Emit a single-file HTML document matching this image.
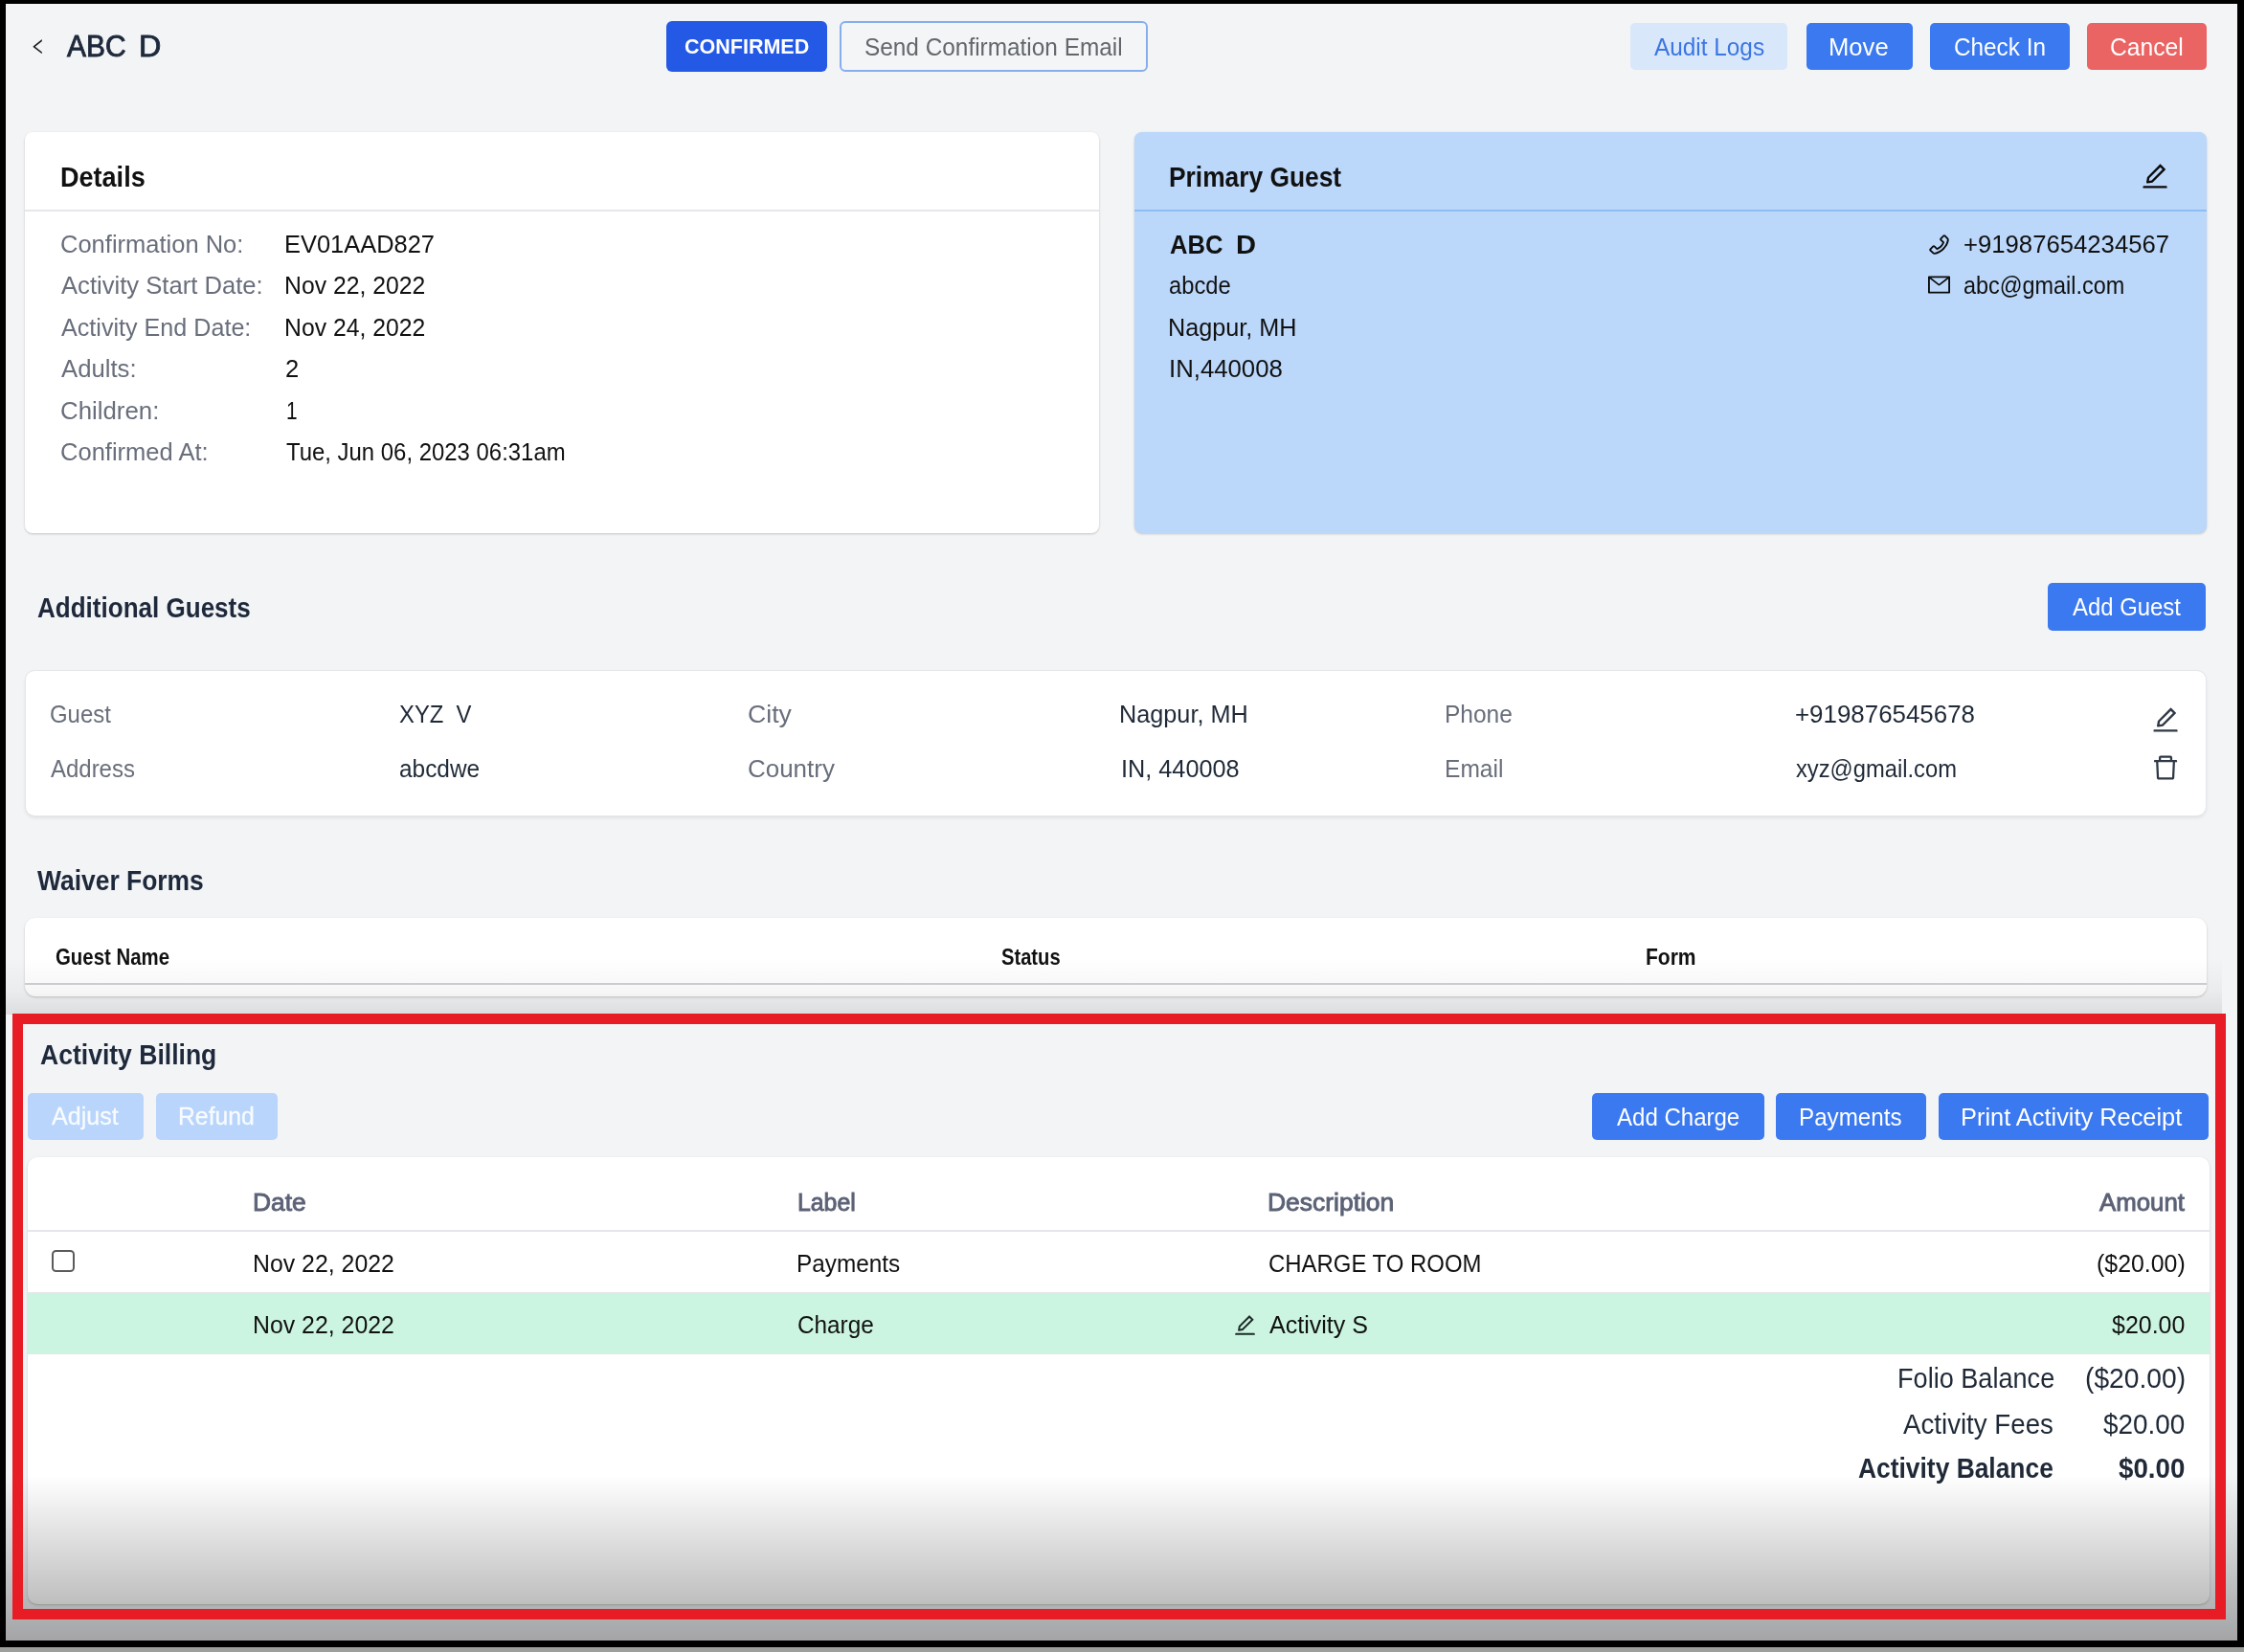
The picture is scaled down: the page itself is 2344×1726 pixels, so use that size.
<!DOCTYPE html>
<html lang="en"><head><meta charset="utf-8"><title>ABC D - Activity Reservation</title>
<style>
html,body{margin:0;padding:0;}
body{width:2344px;height:1726px;background:#000;overflow:hidden;position:relative;font-family:"Liberation Sans", sans-serif;}
#page{position:absolute;left:6px;top:4px;width:2331px;height:1710px;background:#f3f4f6;}
#strip{position:absolute;left:0;top:1721px;width:2344px;height:5px;background:#9d9f9d;}
.b{position:absolute;}
#txt{position:absolute;left:0;top:0;width:2344px;height:1726px;will-change:transform;}
.t{position:absolute;white-space:pre;transform-origin:0 50%;}
#shade{position:absolute;left:6px;top:1541px;width:2331px;height:173px;background:linear-gradient(to bottom,rgba(0,0,0,0),rgba(0,0,0,.325));}
#red{position:absolute;left:13px;top:1059px;width:2312px;height:633px;box-sizing:border-box;border:11px solid #e81c24;}
</style></head>
<body>
<div id="page"></div>
<div id="strip"></div>
<div class="b" style="left:695.5px;top:22px;width:168.7px;height:53.0px;background:#2459e5;border-radius:6px;"></div>
<div class="b" style="left:877.3px;top:22px;width:321.7px;height:53.0px;border:2px solid #86aeee;border-radius:6px;box-sizing:border-box;background:#f4f5f7;"></div>
<div class="b" style="left:1703.3px;top:23.8px;width:163.4px;height:49.4px;background:#d9e7fb;border-radius:5px;"></div>
<div class="b" style="left:1886.5px;top:23.8px;width:111.8px;height:49.4px;background:#3b79f0;border-radius:5px;"></div>
<div class="b" style="left:2016.3px;top:23.8px;width:146.0px;height:49.4px;background:#3b79f0;border-radius:5px;"></div>
<div class="b" style="left:2180px;top:23.8px;width:124.7px;height:49.4px;background:#ea6463;border-radius:5px;"></div>
<div class="b" style="left:25.8px;top:137.5px;width:1121.8px;height:419.9px;background:#fff;border-radius:8px;box-shadow:0 1px 3px rgba(0,0,0,.12),0 1px 2px rgba(0,0,0,.08);"></div>
<div class="b" style="left:25.8px;top:219.3px;width:1121.8px;height:2.0px;background:#e5e7eb;"></div>
<div class="b" style="left:1185px;top:137.8px;width:1119.5px;height:419.6px;background:#bbd7fa;border-radius:8px;box-shadow:0 1px 3px rgba(0,0,0,.12),0 1px 2px rgba(0,0,0,.08);"></div>
<div class="b" style="left:1185px;top:219.0px;width:1119.5px;height:2.0px;background:#8fbdf3;"></div>
<div class="b" style="left:2139.3px;top:609.4px;width:165.2px;height:49.2px;background:#3b79f0;border-radius:5px;"></div>
<div class="b" style="left:27.2px;top:701.3px;width:2276.5px;height:151.1px;background:#fff;border-radius:9px;box-shadow:0 0 0 1px #e4e6ea,0 2px 4px rgba(0,0,0,.10);"></div>
<div class="b" style="left:25.8px;top:959.4px;width:2279.2px;height:81.8px;background:#fff;border-radius:11px;box-shadow:0 1px 3px rgba(0,0,0,.12),0 1px 2px rgba(0,0,0,.08);"></div>
<div class="b" style="left:25.8px;top:1027.2px;width:2279.2px;height:1.6px;background:#cfd2d8;"></div>
<div class="b" style="left:6px;top:1000px;width:2315.0px;height:59.5px;background:linear-gradient(to bottom,rgba(0,0,0,0) 0%,rgba(0,0,0,.035) 60%,rgba(0,0,0,.095) 100%);"></div>
<div class="b" style="left:29.4px;top:1141.9px;width:120.3px;height:49.6px;background:#b9d5fb;border-radius:5px;"></div>
<div class="b" style="left:162.6px;top:1141.9px;width:127.7px;height:49.6px;background:#b9d5fb;border-radius:5px;"></div>
<div class="b" style="left:1663.1px;top:1141.9px;width:180.0px;height:49.6px;background:#3b79f0;border-radius:5px;"></div>
<div class="b" style="left:1855.4px;top:1141.9px;width:156.7px;height:49.6px;background:#3b79f0;border-radius:5px;"></div>
<div class="b" style="left:2024.7px;top:1141.9px;width:282.7px;height:49.6px;background:#3b79f0;border-radius:5px;"></div>
<div class="b" style="left:28.5px;top:1208.6px;width:2279.4px;height:467.9px;background:#fff;border-radius:10px;box-shadow:0 1px 3px rgba(0,0,0,.12),0 1px 2px rgba(0,0,0,.08);"></div>
<div class="b" style="left:28.5px;top:1285.3px;width:2279.4px;height:2.0px;background:#e5e7eb;"></div>
<div class="b" style="left:28.5px;top:1349.6px;width:2279.4px;height:1.4px;background:#e5e7eb;"></div>
<div class="b" style="left:28.5px;top:1350.8px;width:2279.4px;height:64.0px;background:#cbf5e1;"></div>
<div class="b" style="left:28.5px;top:1414.0px;width:2279.4px;height:1.2px;background:#dcebe4;"></div>
<div class="b" style="left:53.6px;top:1305.5px;width:24.0px;height:23.4px;border:2px solid #5b5b5b;border-radius:4.5px;box-sizing:border-box;background:#fff;"></div>
<svg class="b" style="left:30.8px;top:40.0px" width="17.4" height="17.4" viewBox="64 64 896 896"><path fill="#1a1a1a" d="M724 218.300V141c0-6.700-7.700-10.400-12.900-6.300L260.300 486.800a31.860 31.860 0 000 50.300l450.800 352.100c5.300 4.100 12.900.4 12.900-6.300v-77.300c0-4.900-2.300-9.600-6.100-12.600l-360-281 360-281.100c3.800-3 6.100-7.700 6.100-12.600z"/></svg>
<svg class="b" style="left:2237.4px;top:169.8px" width="28.1" height="28.1" viewBox="64 64 896 896"><path fill="#0a0a0a" d="M257.7 752c2 0 4-.2 6-.5L431.9 722c2-.4 3.9-1.3 5.3-2.8l423.9-423.9a9.96 9.96 0 000-14.1L694.9 114.9c-1.9-1.9-4.4-2.9-7.1-2.9s-5.2 1-7.1 2.9L256.8 538.8c-1.5 1.5-2.4 3.3-2.8 5.3l-29.500 168.200a33.500 33.500 0 009.400 29.800c6.600 6.400 14.900 9.900 23.800 9.900zm67.400-174.400L687.800 215l73.300 73.300-362.700 362.600-88.900 15.700 15.600-89zM880 836H144c-17.700 0-32 14.300-32 32v36c0 4.400 3.600 8 8 8h784c4.400 0 8-3.600 8-8v-36c0-17.700-14.300-32-32-32z"/></svg>
<svg class="b" style="left:2013.6px;top:243.9px" width="23" height="23" viewBox="64 64 896 896"><path fill="#0a0a0a" d="M877.1 238.7L770.6 132.300c-13-13-30.400-20.300-48.800-20.300s-35.800 7.200-48.800 20.300L558.300 246.800c-13 13-20.300 30.500-20.300 48.900 0 18.500 7.200 35.800 20.300 48.900l89.600 89.700a405.460 405.460 0 01-86.400 127.300c-36.700 36.900-79.600 66-127.200 86.600l-89.600-89.700c-13-13-30.400-20.300-48.800-20.300a68.200 68.200 0 00-48.800 20.300L132.300 673c-13 13-20.300 30.500-20.300 48.900 0 18.500 7.200 35.800 20.300 48.900l106.400 106.400c22.200 22.200 52.800 34.900 84.200 34.900 6.500 0 12.800-.5 19.200-1.600 132.400-21.800 263.800-92.300 369.900-198.300C818 606 888.400 474.600 910.400 342.100c6.300-37.600-6.300-76.300-33.300-103.400zm-37.600 91.500c-19.500 117.900-82.900 235.500-178.400 331s-213 158.900-330.900 178.400c-14.800 2.500-30-2.500-40.800-13.200L184.900 721.900 295.700 611l119.800 120 .9.900 21.600-8a481.290 481.290 0 00285.700-285.800l8-21.600-120.800-120.700 110.800-110.900 104.500 104.500c10.800 10.800 15.800 26 13.300 40.800z"/></svg>
<svg class="b" style="left:2013.6px;top:286.1px" width="23" height="23" viewBox="64 64 896 896"><path fill="#0a0a0a" d="M928 160H96c-17.700 0-32 14.300-32 32v640c0 17.700 14.300 32 32 32h832c17.700 0 32-14.300 32-32V192c0-17.700-14.300-32-32-32zm-40 110.800V792H136V270.800l-27.600-21.500 39.300-50.500 42.800 33.300h643.100l42.800-33.300 39.300 50.500-27.700 21.500zM833.600 232L512 482 190.400 232l-42.800-33.300-39.300 50.500 27.600 21.500 341.600 265.600a55.990 55.990 0 0068.700 0L888 270.800l27.600-21.500-39.300-50.500-42.700 33.200z"/></svg>
<svg class="b" style="left:2247.9px;top:737.9px" width="28.1" height="28.1" viewBox="64 64 896 896"><path fill="#2f3844" d="M257.7 752c2 0 4-.2 6-.5L431.9 722c2-.4 3.9-1.3 5.3-2.8l423.9-423.9a9.96 9.96 0 000-14.1L694.9 114.9c-1.9-1.9-4.4-2.9-7.1-2.9s-5.2 1-7.1 2.9L256.8 538.8c-1.5 1.5-2.4 3.3-2.8 5.3l-29.500 168.200a33.500 33.500 0 009.400 29.800c6.600 6.400 14.900 9.900 23.800 9.900zm67.400-174.400L687.800 215l73.300 73.300-362.700 362.600-88.900 15.700 15.600-89zM880 836H144c-17.700 0-32 14.300-32 32v36c0 4.400 3.600 8 8 8h784c4.400 0 8-3.600 8-8v-36c0-17.700-14.300-32-32-32z"/></svg>
<svg class="b" style="left:2247.6px;top:787.8px" width="28.1" height="28.1" viewBox="64 64 896 896"><path fill="#2f3844" d="M360 184h-8c4.400 0 8-3.600 8-8v8h304v-8c0 4.400 3.600 8 8 8h-8v72h72v-80c0-35.300-28.700-64-64-64H352c-35.300 0-64 28.700-64 64v80h72v-72zm504 72H160c-17.700 0-32 14.300-32 32v32c0 4.400 3.600 8 8 8h60.400l24.700 523c1.600 34.100 29.800 61 63.900 61h454c34.200 0 62.300-26.800 63.900-61l24.700-523H888c4.400 0 8-3.600 8-8v-32c0-17.700-14.300-32-32-32zM731.300 840H292.700l-24.200-512h487l-24.200 512z"/></svg>
<svg class="b" style="left:1288.8px;top:1372.8px" width="23" height="23" viewBox="64 64 896 896"><path fill="#1c2a26" d="M257.7 752c2 0 4-.2 6-.5L431.9 722c2-.4 3.9-1.3 5.3-2.8l423.9-423.9a9.96 9.96 0 000-14.1L694.9 114.9c-1.9-1.9-4.4-2.9-7.1-2.9s-5.2 1-7.1 2.9L256.8 538.8c-1.5 1.5-2.4 3.3-2.8 5.3l-29.500 168.200a33.500 33.500 0 009.400 29.800c6.600 6.400 14.900 9.900 23.800 9.900zm67.400-174.400L687.800 215l73.300 73.300-362.700 362.600-88.900 15.700 15.600-89zM880 836H144c-17.700 0-32 14.300-32 32v36c0 4.400 3.600 8 8 8h784c4.400 0 8-3.600 8-8v-36c0-17.700-14.300-32-32-32z"/></svg>
<div id="txt">
<span class="t" style="left:70.05px;top:27px;line-height:43px;font-size:31.39px;color:#1e293b;transform:scaleX(0.9553);-webkit-text-stroke:0.9px #1e293b;">ABC</span>
<span class="t" style="left:145.29px;top:27px;line-height:43px;font-size:31.39px;color:#1e293b;transform:scaleX(1.0300);-webkit-text-stroke:0.9px #1e293b;">D</span>
<span class="t" style="left:715.20px;top:32px;line-height:33px;font-size:22.5px;color:#ffffff;transform:scaleX(0.9559);font-weight:700;">CONFIRMED</span>
<span class="t" style="left:903.36px;top:30px;line-height:38px;font-size:26px;color:#63666b;transform:scaleX(0.9374);">Send Confirmation Email</span>
<span class="t" style="left:1727.70px;top:31px;line-height:36px;font-size:25.6px;color:#3b76e1;transform:scaleX(0.9513);">Audit Logs</span>
<span class="t" style="left:1910.00px;top:31px;line-height:36px;font-size:25.6px;color:#ffffff;transform:scaleX(1.0008);">Move</span>
<span class="t" style="left:2041.25px;top:31px;line-height:36px;font-size:25.6px;color:#ffffff;transform:scaleX(0.9497);">Check In</span>
<span class="t" style="left:2204.34px;top:31px;line-height:36px;font-size:25.6px;color:#ffffff;transform:scaleX(0.9626);">Cancel</span>
<span class="t" style="left:63.28px;top:164px;line-height:41px;font-size:29.5px;color:#111111;transform:scaleX(0.9168);font-weight:700;">Details</span>
<span class="t" style="left:62.92px;top:236px;line-height:38px;font-size:26px;color:#696e7b;transform:scaleX(0.9810);">Confirmation No:</span>
<span class="t" style="left:296.94px;top:236px;line-height:38px;font-size:26px;color:#111111;transform:scaleX(0.9786);">EV01AAD827</span>
<span class="t" style="left:63.90px;top:279px;line-height:38px;font-size:26px;color:#696e7b;transform:scaleX(0.9853);">Activity Start Date:</span>
<span class="t" style="left:297.00px;top:279px;line-height:38px;font-size:26px;color:#111111;transform:scaleX(0.9520);">Nov 22, 2022</span>
<span class="t" style="left:63.90px;top:323px;line-height:38px;font-size:26px;color:#696e7b;transform:scaleX(0.9666);">Activity End Date:</span>
<span class="t" style="left:297.00px;top:323px;line-height:38px;font-size:26px;color:#111111;transform:scaleX(0.9520);">Nov 24, 2022</span>
<span class="t" style="left:63.90px;top:366px;line-height:38px;font-size:26px;color:#696e7b;transform:scaleX(0.9888);">Adults:</span>
<span class="t" style="left:297.92px;top:366px;line-height:38px;font-size:26px;color:#111111;transform:scaleX(0.9846);">2</span>
<span class="t" style="left:62.91px;top:410px;line-height:38px;font-size:26px;color:#696e7b;transform:scaleX(0.9928);">Children:</span>
<span class="t" style="left:299.40px;top:410px;line-height:38px;font-size:26px;color:#111111;transform:scaleX(0.8000);">1</span>
<span class="t" style="left:62.92px;top:453px;line-height:38px;font-size:26px;color:#696e7b;transform:scaleX(0.9819);">Confirmed At:</span>
<span class="t" style="left:298.90px;top:453px;line-height:38px;font-size:26px;color:#111111;transform:scaleX(0.9198);">Tue, Jun 06, 2023 06:31am</span>
<span class="t" style="left:1221.31px;top:164px;line-height:41px;font-size:29.5px;color:#111111;transform:scaleX(0.8932);font-weight:700;">Primary Guest</span>
<span class="t" style="left:1222.20px;top:236px;line-height:39px;font-size:27.3px;color:#111111;transform:scaleX(0.9362);font-weight:700;">ABC</span>
<span class="t" style="left:1290.93px;top:236px;line-height:39px;font-size:27.3px;color:#111111;transform:scaleX(1.0667);font-weight:700;">D</span>
<span class="t" style="left:1221.29px;top:279px;line-height:38px;font-size:26px;color:#111111;transform:scaleX(0.9124);">abcde</span>
<span class="t" style="left:1220.26px;top:323px;line-height:38px;font-size:26px;color:#111111;transform:scaleX(0.9700);">Nagpur, MH</span>
<span class="t" style="left:1220.72px;top:366px;line-height:38px;font-size:26px;color:#111111;transform:scaleX(0.9904);">IN,440008</span>
<span class="t" style="left:2050.91px;top:236px;line-height:38px;font-size:26px;color:#111111;transform:scaleX(0.9881);">+91987654234567</span>
<span class="t" style="left:2050.70px;top:279px;line-height:38px;font-size:26px;color:#111111;transform:scaleX(0.9010);">abc@gmail.com</span>
<span class="t" style="left:39.10px;top:614px;line-height:41px;font-size:29.5px;color:#1e293b;transform:scaleX(0.8825);font-weight:700;">Additional Guests</span>
<span class="t" style="left:2165.10px;top:615px;line-height:38px;font-size:26px;color:#ffffff;transform:scaleX(0.9189);">Add Guest</span>
<span class="t" style="left:52.38px;top:727px;line-height:38px;font-size:26px;color:#696e7b;transform:scaleX(0.9198);">Guest</span>
<span class="t" style="left:417.30px;top:727px;line-height:38px;font-size:26px;color:#1f2937;transform:scaleX(0.9167);">XYZ  V</span>
<span class="t" style="left:781.08px;top:727px;line-height:38px;font-size:26px;color:#696e7b;transform:scaleX(1.0234);">City</span>
<span class="t" style="left:1169.46px;top:727px;line-height:38px;font-size:26px;color:#1f2937;transform:scaleX(0.9708);">Nagpur, MH</span>
<span class="t" style="left:1509.42px;top:727px;line-height:38px;font-size:26px;color:#696e7b;transform:scaleX(0.9419);">Phone</span>
<span class="t" style="left:1874.90px;top:727px;line-height:38px;font-size:26px;color:#1f2937;transform:scaleX(0.9960);">+919876545678</span>
<span class="t" style="left:53.30px;top:784px;line-height:38px;font-size:26px;color:#696e7b;transform:scaleX(0.9216);">Address</span>
<span class="t" style="left:416.86px;top:784px;line-height:38px;font-size:26px;color:#1f2937;transform:scaleX(0.9381);">abcdwe</span>
<span class="t" style="left:781.10px;top:784px;line-height:38px;font-size:26px;color:#696e7b;transform:scaleX(0.9985);">Country</span>
<span class="t" style="left:1170.66px;top:784px;line-height:38px;font-size:26px;color:#1f2937;transform:scaleX(0.9716);">IN, 440008</span>
<span class="t" style="left:1509.41px;top:784px;line-height:38px;font-size:26px;color:#696e7b;transform:scaleX(0.9448);">Email</span>
<span class="t" style="left:1875.90px;top:784px;line-height:38px;font-size:26px;color:#1f2937;transform:scaleX(0.9132);">xyz@gmail.com</span>
<span class="t" style="left:39.10px;top:899px;line-height:41px;font-size:29.5px;color:#1e293b;transform:scaleX(0.8957);font-weight:700;">Waiver Forms</span>
<span class="t" style="left:57.60px;top:982px;line-height:35px;font-size:24px;color:#111111;transform:scaleX(0.8497);font-weight:700;">Guest Name</span>
<span class="t" style="left:1046.00px;top:982px;line-height:35px;font-size:24px;color:#111111;transform:scaleX(0.8397);font-weight:700;">Status</span>
<span class="t" style="left:1719.12px;top:982px;line-height:35px;font-size:24px;color:#111111;transform:scaleX(0.8758);font-weight:700;">Form</span>
<span class="t" style="left:41.90px;top:1081px;line-height:41px;font-size:29.5px;color:#1e293b;transform:scaleX(0.8996);font-weight:700;">Activity Billing</span>
<span class="t" style="left:54.35px;top:1148px;line-height:36px;font-size:25.56px;color:#f7fbff;transform:scaleX(0.9816);-webkit-text-stroke:0.3px #f7fbff;">Adjust</span>
<span class="t" style="left:186.41px;top:1148px;line-height:36px;font-size:25.56px;color:#f7fbff;transform:scaleX(0.9688);-webkit-text-stroke:0.3px #f7fbff;">Refund</span>
<span class="t" style="left:1689.30px;top:1148px;line-height:38px;font-size:26px;color:#ffffff;transform:scaleX(0.9241);">Add Charge</span>
<span class="t" style="left:1878.84px;top:1148px;line-height:38px;font-size:26px;color:#ffffff;transform:scaleX(0.9304);">Payments</span>
<span class="t" style="left:2048.45px;top:1148px;line-height:38px;font-size:26px;color:#ffffff;transform:scaleX(0.9760);">Print Activity Receipt</span>
<span class="t" style="left:263.61px;top:1238px;line-height:36px;font-size:25.89px;color:#5c6276;transform:scaleX(1.0198);-webkit-text-stroke:0.9px #5c6276;">Date</span>
<span class="t" style="left:832.73px;top:1238px;line-height:36px;font-size:25.89px;color:#5c6276;transform:scaleX(0.9594);-webkit-text-stroke:0.9px #5c6276;">Label</span>
<span class="t" style="left:1324.11px;top:1238px;line-height:36px;font-size:25.89px;color:#5c6276;transform:scaleX(1.0219);-webkit-text-stroke:0.9px #5c6276;">Description</span>
<span class="t" style="left:2192.65px;top:1238px;line-height:36px;font-size:25.89px;color:#5c6276;transform:scaleX(0.9979);-webkit-text-stroke:0.9px #5c6276;">Amount</span>
<span class="t" style="left:263.89px;top:1301px;line-height:38px;font-size:26px;color:#111111;transform:scaleX(0.9559);">Nov 22, 2022</span>
<span class="t" style="left:832.33px;top:1301px;line-height:38px;font-size:26px;color:#111111;transform:scaleX(0.9366);">Payments</span>
<span class="t" style="left:1324.78px;top:1301px;line-height:38px;font-size:26px;color:#111111;transform:scaleX(0.9201);">CHARGE TO ROOM</span>
<span class="t" style="left:2189.84px;top:1301px;line-height:38px;font-size:26px;color:#111111;transform:scaleX(0.9571);">($20.00)</span>
<span class="t" style="left:263.89px;top:1365px;line-height:38px;font-size:26px;color:#111111;transform:scaleX(0.9559);">Nov 22, 2022</span>
<span class="t" style="left:833.26px;top:1365px;line-height:38px;font-size:26px;color:#111111;transform:scaleX(0.9354);">Charge</span>
<span class="t" style="left:1325.70px;top:1365px;line-height:38px;font-size:26px;color:#111111;transform:scaleX(0.9628);">Activity S</span>
<span class="t" style="left:2206.00px;top:1365px;line-height:38px;font-size:26px;color:#111111;transform:scaleX(0.9600);">$20.00</span>
<span class="t" style="left:1981.64px;top:1420px;line-height:40px;font-size:29.2px;color:#1f2937;transform:scaleX(0.9285);">Folio Balance</span>
<span class="t" style="left:2178.43px;top:1420px;line-height:40px;font-size:29.2px;color:#1f2937;transform:scaleX(0.9671);">($20.00)</span>
<span class="t" style="left:1988.40px;top:1468px;line-height:40px;font-size:29.2px;color:#1f2937;transform:scaleX(0.9482);">Activity Fees</span>
<span class="t" style="left:2196.80px;top:1468px;line-height:40px;font-size:29.2px;color:#1f2937;transform:scaleX(0.9558);">$20.00</span>
<span class="t" style="left:1941.10px;top:1514px;line-height:40px;font-size:29.2px;color:#1f2937;transform:scaleX(0.9039);font-weight:700;">Activity Balance</span>
<span class="t" style="left:2212.80px;top:1514px;line-height:40px;font-size:29.2px;color:#1f2937;transform:scaleX(0.9491);font-weight:700;">$0.00</span>
</div>
<div id="shade"></div>
<div id="red"></div>
</body></html>
